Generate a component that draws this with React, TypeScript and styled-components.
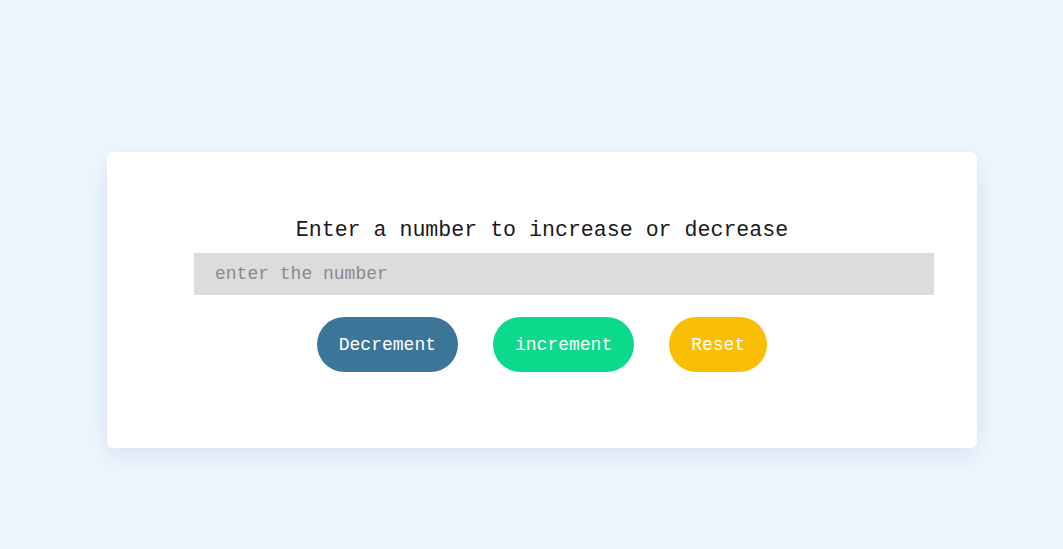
import React, { useState } from 'react';
import styled, { createGlobalStyle } from 'styled-components';

const GlobalStyle = createGlobalStyle`
  html, body {
    margin: 0;
    padding: 0;
    background: #eff6fe;
    font-family: "Liberation Mono", "Courier New", monospace;
  }
`;

const Page = styled.div`
  min-height: 549px;
  padding: 152px 0 0 107px;
  box-sizing: border-box;
`;

const Card = styled.div`
  width: 870px;
  height: 296px;
  box-sizing: border-box;
  padding: 66px 0 0;
  background: #ffffff;
  border-radius: 6px;
  box-shadow: 0 8px 28px rgba(40, 70, 120, 0.12);
  display: flex;
  flex-direction: column;
  align-items: center;
`;

const Title = styled.h2`
  margin: 0 0 11px;
  font-size: 21.6px;
  font-weight: normal;
  line-height: 24px;
  color: #1a1a1a;
`;

const NumberInput = styled.input`
  align-self: flex-start;
  margin-left: 87px;
  width: 740px;
  height: 42px;
  box-sizing: border-box;
  border: none;
  outline: none;
  background: #dcdcdc;
  padding: 0 21px;
  font-family: inherit;
  font-size: 18px;
  color: #333;

  &::placeholder {
    color: #8a8a8a;
  }
`;

const ButtonRow = styled.div`
  display: flex;
  gap: 35px;
  margin-top: 22px;
`;

const Pill = styled.button<{ $bg: string }>`
  height: 55px;
  padding: 0 22px;
  border: none;
  border-radius: 28px;
  background: ${(p) => p.$bg};
  color: #ffffff;
  font-family: inherit;
  font-size: 18px;
  cursor: pointer;
`;

export default function App() {
  const [value, setValue] = useState('');
  const num = Number(value) || 0;

  return (
    <>
      <GlobalStyle />
      <Page>
        <Card>
          <Title>Enter a number to increase or decrease</Title>
          <NumberInput
            type="text"
            placeholder="enter the number"
            value={value}
            onChange={(e) => setValue(e.target.value)}
          />
          <ButtonRow>
            <Pill $bg="#3b7698" onClick={() => setValue(String(num - 1))}>
              Decrement
            </Pill>
            <Pill $bg="#0bd98c" onClick={() => setValue(String(num + 1))}>
              increment
            </Pill>
            <Pill $bg="#fabf04" onClick={() => setValue('')}>
              Reset
            </Pill>
          </ButtonRow>
        </Card>
      </Page>
    </>
  );
}
